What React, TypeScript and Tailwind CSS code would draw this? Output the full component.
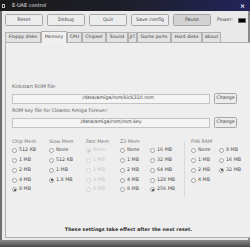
import React from 'react';

const font = { fontFamily: '"DejaVu Sans", "Liberation Sans", sans-serif' };

type Opt = { label: string; on?: boolean };

const chip: Opt[] = [{ label: '512 KB' }, { label: '1 MB' }, { label: '2 MB' }, { label: '4 MB' }, { label: '8 MB', on: true }];
const slow: Opt[] = [{ label: 'None' }, { label: '512 KB' }, { label: '1 MB' }, { label: '1.8 MB', on: true }];
const fast: Opt[] = [{ label: 'None', on: true }, { label: '1 MB' }, { label: '2 MB' }, { label: '4 MB' }, { label: '8 MB' }];
const z3a: Opt[] = [{ label: 'None' }, { label: '1 MB' }, { label: '2 MB' }, { label: '4 MB' }, { label: '8 MB' }];
const z3b: Opt[] = [{ label: '16 MB' }, { label: '32 MB' }, { label: '64 MB' }, { label: '128 MB' }, { label: '256 MB', on: true }];
const p96a: Opt[] = [{ label: 'None' }, { label: '1 MB' }, { label: '2 MB' }, { label: '4 MB' }];
const p96b: Opt[] = [{ label: '8 MB' }, { label: '16 MB' }, { label: '32 MB', on: true }];

const tabs = [
  { label: 'Floppy disks', w: 'w-[36px]' },
  { label: 'Memory', w: 'w-[26px]', active: true },
  { label: 'CPU', w: 'w-[15px]' },
  { label: 'Chipset', w: 'w-[24px]' },
  { label: 'Sound', w: 'w-[22px]' },
  { label: 'JIT', w: 'w-[9px]' },
  { label: 'Game ports', w: 'w-[34px]' },
  { label: 'Hard disks', w: 'w-[31px]' },
  { label: 'About', w: 'w-[19px]' },
];

const Radio: React.FC<{ opt: Opt; disabled?: boolean }> = ({ opt, disabled }) => (
  <div className={`flex items-center h-[9.75px] ${disabled ? 'text-[#c8c8c8]' : 'text-[#4a4a4a]'}`}>
    <span
      className={`w-[5px] h-[5px] shrink-0 rounded-full border-[0.5px] flex items-center justify-center ${
        disabled ? 'border-[#d4d4d4] bg-[#f2f2f2]' : 'border-[#a0a0a0] bg-[#fafafa]'
      }`}
    >
      {opt.on && <span className={`w-[2px] h-[2px] rounded-full ${disabled ? 'bg-[#bdbdbd]' : 'bg-[#333]'}`} />}
    </span>
    <span className="ml-[2px] whitespace-nowrap">{opt.label}</span>
  </div>
);

const Col: React.FC<{ opts: Opt[]; w: string; disabled?: boolean }> = ({ opts, w, disabled }) => (
  <div className={`flex flex-col ${w}`}>
    {opts.map((o) => (
      <Radio key={o.label} opt={o} disabled={disabled} />
    ))}
  </div>
);

const Btn: React.FC<{ label: string; pressed?: boolean }> = ({ label, pressed }) => (
  <div
    className={`w-[38px] h-[12px] flex items-center justify-center rounded-[1.5px] border-[0.5px] border-[#a6a6a6] text-[#444] ${
      pressed ? 'bg-[#d3d3d3]' : 'bg-[#ececec]'
    }`}
  >
    {label}
  </div>
);

export default function App() {
  return (
    <div className="w-[250px] h-[247px] bg-[#e9e9e9] flex flex-col overflow-hidden text-[4.8px] leading-none" style={font}>
      {/* title bar */}
      <div className="h-[11px] flex items-center bg-gradient-to-r from-[#1a1a1a] via-[#1e1e2a] to-[#23235a] text-[#e4e4e4]">
        <span className="ml-[2px] w-[3px] h-[4px] border-[0.5px] border-[#bbb]" />
        <span className="ml-[7px] text-[5px]">E-UAE control</span>
        <span className="ml-auto mr-[5px] text-[6px] font-bold text-white">×</span>
      </div>

      <div className="flex-1 flex border-l-[2px] border-l-[#6e6e6e] border-r-[2px] border-r-[#8a8a8a]">
        <div className="flex-1 flex flex-col px-[3px]">
          {/* buttons */}
          <div className="flex items-center mt-[3px] gap-[4px]">
            <Btn label="Reset" />
            <Btn label="Debug" />
            <Btn label="Quit" />
            <Btn label="Save config" />
            <Btn label="Pause" pressed />
            <span className="ml-[2px] text-[#444]">Power:</span>
            <span className="ml-[1px] w-[8px] h-[5px] bg-black border-[0.5px] border-[#666]" />
          </div>

          {/* tabs */}
          <div className="flex items-end mt-[4px] h-[12px] text-[4.6px]">
            {tabs.map((t) => (
              <div
                key={t.label}
                className={`${t.w} flex items-center justify-center whitespace-nowrap border-[0.5px] border-b-0 border-[#b0b0b0] text-[#3a3a3a] ${
                  t.active ? 'h-[12px] bg-[#f0f0f0] relative z-10 -mb-[1px]' : 'h-[10px] bg-[#e2e2e2]'
                }`}
              >
                {t.label}
              </div>
            ))}
          </div>

          {/* panel */}
          <div className="h-[196px] mr-[2px] bg-[#eeeeee] border-[0.5px] border-[#b0b0b0] flex flex-col px-[6px] text-[#5a5a5a]">
            <div className="mt-[41px] h-[6px] flex items-center">Kickstart ROM file:</div>
            <div className="mt-[3px] flex items-center gap-[4px]">
              <div className="w-[198px] h-[10px] bg-[#f4f4f4] border-[0.5px] border-[#c4c4c4] flex items-center justify-center text-[#444] pl-[14px]">
                /data/amiga/rom/kick310.rom
              </div>
              <div className="w-[23px] h-[11px] rounded-[1.5px] border-[0.5px] border-[#a6a6a6] bg-[#ececec] flex items-center justify-center text-[#444]">
                Change
              </div>
            </div>
            <div className="mt-[4px] h-[6px] flex items-center">ROM key file for Cloanto Amiga Forever:</div>
            <div className="mt-[3px] flex items-center gap-[4px]">
              <div className="w-[198px] h-[10px] bg-[#f4f4f4] border-[0.5px] border-[#c4c4c4] flex items-center justify-center text-[#444]">
                /data/amiga/rom/rom.key
              </div>
              <div className="w-[23px] h-[11px] rounded-[1.5px] border-[0.5px] border-[#a6a6a6] bg-[#ececec] flex items-center justify-center text-[#444]">
                Change
              </div>
            </div>

            {/* memory groups */}
            <div className="mt-[10px] flex">
              <div className="w-[37px] flex flex-col">
                <div className="h-[8px] flex items-center text-[#777]">Chip Mem</div>
                <Col opts={chip} w="w-[37px]" />
              </div>
              <div className="w-[37px] flex flex-col">
                <div className="h-[8px] flex items-center text-[#777]">Slow Mem</div>
                <Col opts={slow} w="w-[37px]" />
              </div>
              <div className="w-[34px] flex flex-col">
                <div className="h-[8px] flex items-center text-[#777]">Fast Mem</div>
                <Col opts={fast} w="w-[34px]" disabled />
              </div>
              <div className="w-[64px] flex flex-col">
                <div className="h-[8px] flex items-center text-[#777]">Z3 Mem</div>
                <div className="flex">
                  <Col opts={z3a} w="w-[30px]" />
                  <Col opts={z3b} w="w-[34px]" />
                </div>
              </div>
              <div className="w-[1px] h-[55px] mt-[4px] bg-[#dadada] mr-[6px]" />
              <div className="flex flex-col">
                <div className="h-[8px] flex items-center text-[#777]">P96 RAM</div>
                <div className="flex">
                  <Col opts={p96a} w="w-[28px]" />
                  <Col opts={p96b} w="w-[26px]" />
                </div>
              </div>
            </div>

            <div className="mt-auto mb-[4px] h-[6px] flex items-center justify-center font-bold text-[#2a2a2a]">
              These settings take effect after the next reset.
            </div>
          </div>
        </div>
      </div>

      {/* bottom frame */}
      <div className="h-[7px] bg-gradient-to-b from-[#8a8a8a] to-[#4a4a4a]" />
    </div>
  );
}
